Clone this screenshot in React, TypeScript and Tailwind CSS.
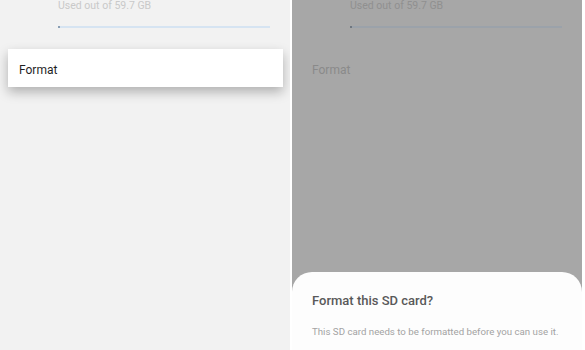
import React from "react";

export default function App() {
  return (
    <div
      className="flex w-[585px] h-[350px] overflow-hidden bg-white"
      style={{ fontFamily: "Roboto, 'Noto Sans', sans-serif" }}
    >
      {/* Left panel */}
      <div className="w-[290px] h-full bg-[#f2f2f2] flex flex-col">
        <div className="pl-[58px] pr-[20px]">
          <div className="text-[10.5px] leading-[12px] text-[#c9c9c9]">Used out of 59.7 GB</div>
          <div className="mt-[14px] h-[2px] bg-[#d6e4f2] flex">
            <div className="w-[2px] h-[2px] bg-[#8a9fb5]" />
          </div>
        </div>
        <div className="mt-[21px] mx-[8px] w-[275px] h-[38px] bg-white flex items-center pl-[11px] pt-[3px] shadow-[0_5px_12px_rgba(0,0,0,0.28)]">
          <span className="text-[12px] text-[#1f1f1f]">Format</span>
        </div>
      </div>

      <div className="w-[2px] h-full bg-white" />

      {/* Right panel */}
      <div className="w-[290px] h-full bg-[#a7a7a7] flex flex-col">
        <div className="pl-[58px] pr-[20px]">
          <div className="text-[10.5px] leading-[12px] text-[#909090]">Used out of 59.7 GB</div>
          <div className="mt-[14px] h-[2px] bg-[#9ba2aa] flex">
            <div className="w-[2px] h-[2px] bg-[#6f7780]" />
          </div>
        </div>
        <div className="mt-[21px] h-[38px] flex items-center pl-[20px] pt-[3px]">
          <span className="text-[12px] text-[#8a8a8a]">Format</span>
        </div>
        <div className="flex-1" />
        <div className="h-[78px] bg-[#fdfdfd] rounded-t-[20px] px-[20px] pt-[21px]">
          <div className="text-[13px] leading-[16px] font-medium text-[#595959]">Format this SD card?</div>
          <div className="mt-[16px] whitespace-nowrap text-[9.7px] leading-[13px] text-[#a3a3a3]">
            This SD card needs to be formatted before you can use it.
          </div>
        </div>
      </div>

      <div className="w-[3px] h-full bg-white" />
    </div>
  );
}
